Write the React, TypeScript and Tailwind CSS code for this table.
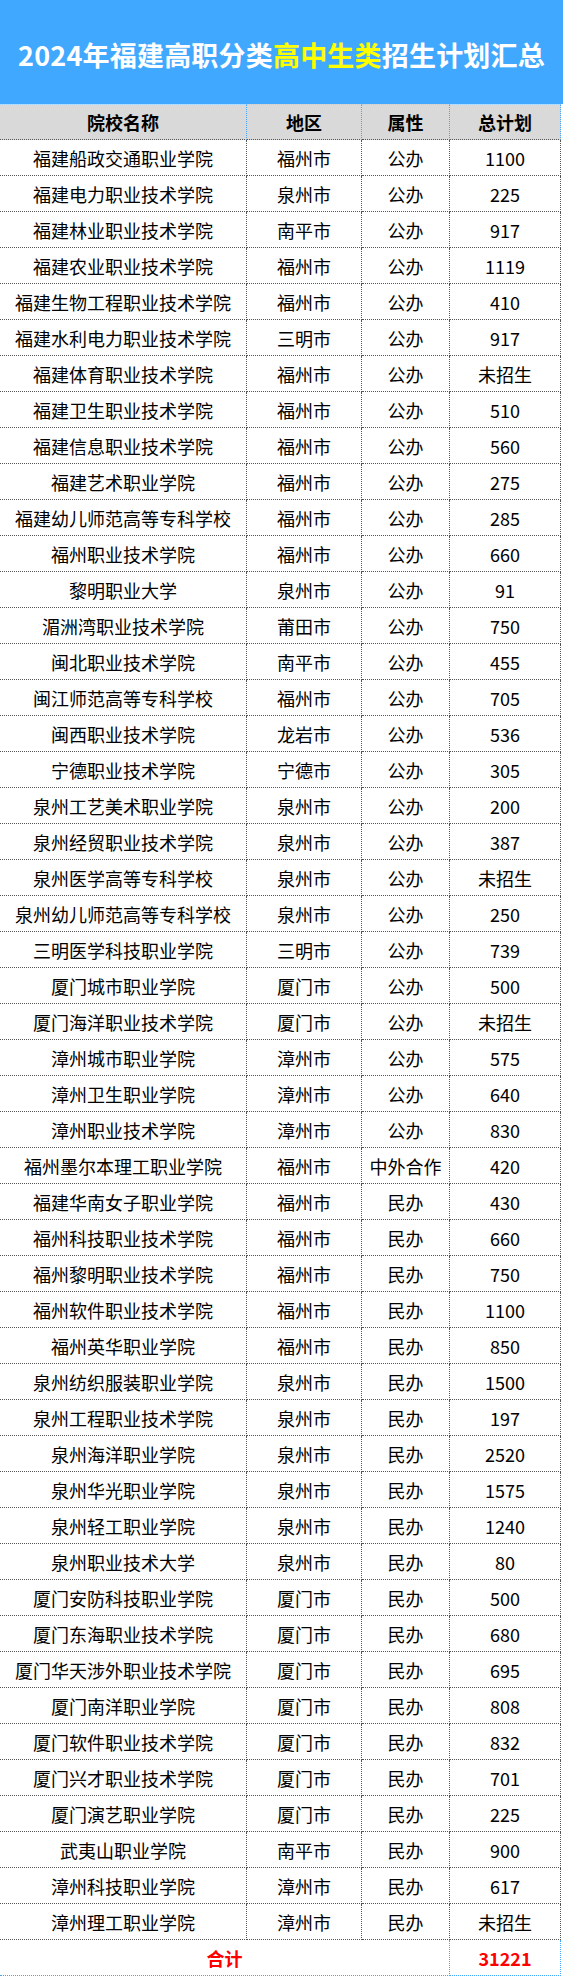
const rows: [string, string, string, string][] = [
  ['福建船政交通职业学院', '福州市', '公办', '1100'],
  ['福建电力职业技术学院', '泉州市', '公办', '225'],
  ['福建林业职业技术学院', '南平市', '公办', '917'],
  ['福建农业职业技术学院', '福州市', '公办', '1119'],
  ['福建生物工程职业技术学院', '福州市', '公办', '410'],
  ['福建水利电力职业技术学院', '三明市', '公办', '917'],
  ['福建体育职业技术学院', '福州市', '公办', '未招生'],
  ['福建卫生职业技术学院', '福州市', '公办', '510'],
  ['福建信息职业技术学院', '福州市', '公办', '560'],
  ['福建艺术职业学院', '福州市', '公办', '275'],
  ['福建幼儿师范高等专科学校', '福州市', '公办', '285'],
  ['福州职业技术学院', '福州市', '公办', '660'],
  ['黎明职业大学', '泉州市', '公办', '91'],
  ['湄洲湾职业技术学院', '莆田市', '公办', '750'],
  ['闽北职业技术学院', '南平市', '公办', '455'],
  ['闽江师范高等专科学校', '福州市', '公办', '705'],
  ['闽西职业技术学院', '龙岩市', '公办', '536'],
  ['宁德职业技术学院', '宁德市', '公办', '305'],
  ['泉州工艺美术职业学院', '泉州市', '公办', '200'],
  ['泉州经贸职业技术学院', '泉州市', '公办', '387'],
  ['泉州医学高等专科学校', '泉州市', '公办', '未招生'],
  ['泉州幼儿师范高等专科学校', '泉州市', '公办', '250'],
  ['三明医学科技职业学院', '三明市', '公办', '739'],
  ['厦门城市职业学院', '厦门市', '公办', '500'],
  ['厦门海洋职业技术学院', '厦门市', '公办', '未招生'],
  ['漳州城市职业学院', '漳州市', '公办', '575'],
  ['漳州卫生职业学院', '漳州市', '公办', '640'],
  ['漳州职业技术学院', '漳州市', '公办', '830'],
  ['福州墨尔本理工职业学院', '福州市', '中外合作', '420'],
  ['福建华南女子职业学院', '福州市', '民办', '430'],
  ['福州科技职业技术学院', '福州市', '民办', '660'],
  ['福州黎明职业技术学院', '福州市', '民办', '750'],
  ['福州软件职业技术学院', '福州市', '民办', '1100'],
  ['福州英华职业学院', '福州市', '民办', '850'],
  ['泉州纺织服装职业学院', '泉州市', '民办', '1500'],
  ['泉州工程职业技术学院', '泉州市', '民办', '197'],
  ['泉州海洋职业学院', '泉州市', '民办', '2520'],
  ['泉州华光职业学院', '泉州市', '民办', '1575'],
  ['泉州轻工职业学院', '泉州市', '民办', '1240'],
  ['泉州职业技术大学', '泉州市', '民办', '80'],
  ['厦门安防科技职业学院', '厦门市', '民办', '500'],
  ['厦门东海职业技术学院', '厦门市', '民办', '680'],
  ['厦门华天涉外职业技术学院', '厦门市', '民办', '695'],
  ['厦门南洋职业学院', '厦门市', '民办', '808'],
  ['厦门软件职业技术学院', '厦门市', '民办', '832'],
  ['厦门兴才职业技术学院', '厦门市', '民办', '701'],
  ['厦门演艺职业学院', '厦门市', '民办', '225'],
  ['武夷山职业学院', '南平市', '民办', '900'],
  ['漳州科技职业学院', '漳州市', '民办', '617'],
  ['漳州理工职业学院', '漳州市', '民办', '未招生'],
];

const headers = ['院校名称', '地区', '属性', '总计划'];

export default function App() {
  return (
    <div
      className="w-[563px] bg-white"
      style={{ fontFamily: '"Microsoft YaHei", "Noto Sans CJK SC", "Noto Sans", sans-serif' }}
    >
      {/* Title banner */}
      <div className="h-[104px] bg-[#40a8ff] flex items-center justify-center pt-1">
        <h1 className="text-[27px] font-bold text-white leading-none tracking-[0.2px]">
          2024年福建高职分类<span className="text-[#ffff00]">高中生类</span>招生计划汇总
        </h1>
      </div>

      <div className="w-[561px] grid grid-cols-[247px_115px_88px_111px] text-[18px] text-black">
        {/* Header row */}
        {headers.map((h) => (
          <div
            key={h}
            className="h-[36px] flex items-center justify-center bg-[#d9d9d9] font-bold border-t border-r border-b border-dotted border-t-[#a9d6ff] border-r-[#40a8ff] border-b-[#555555] leading-none"
          >
            {h}
          </div>
        ))}

        {/* Data rows */}
        {rows.map((r) =>
          r.map((cell, i) => (
            <div
              key={`${r[0]}-${i}`}
              className="h-[36px] flex items-center justify-center border-r border-b border-dotted border-[#555555] leading-none whitespace-nowrap"
            >
              {cell}
            </div>
          )),
        )}

        {/* Total row */}
        <div className="col-span-3 h-[36px] flex items-center justify-center font-bold text-[#ff0000] border-r border-b border-dotted border-r-[#40a8ff] border-b-[#40a8ff] leading-none">
          合计
        </div>
        <div className="h-[36px] flex items-center justify-center font-bold text-[#ff0000] border-r border-b border-dotted border-[#40a8ff] leading-none">
          31221
        </div>
      </div>
    </div>
  );
}
